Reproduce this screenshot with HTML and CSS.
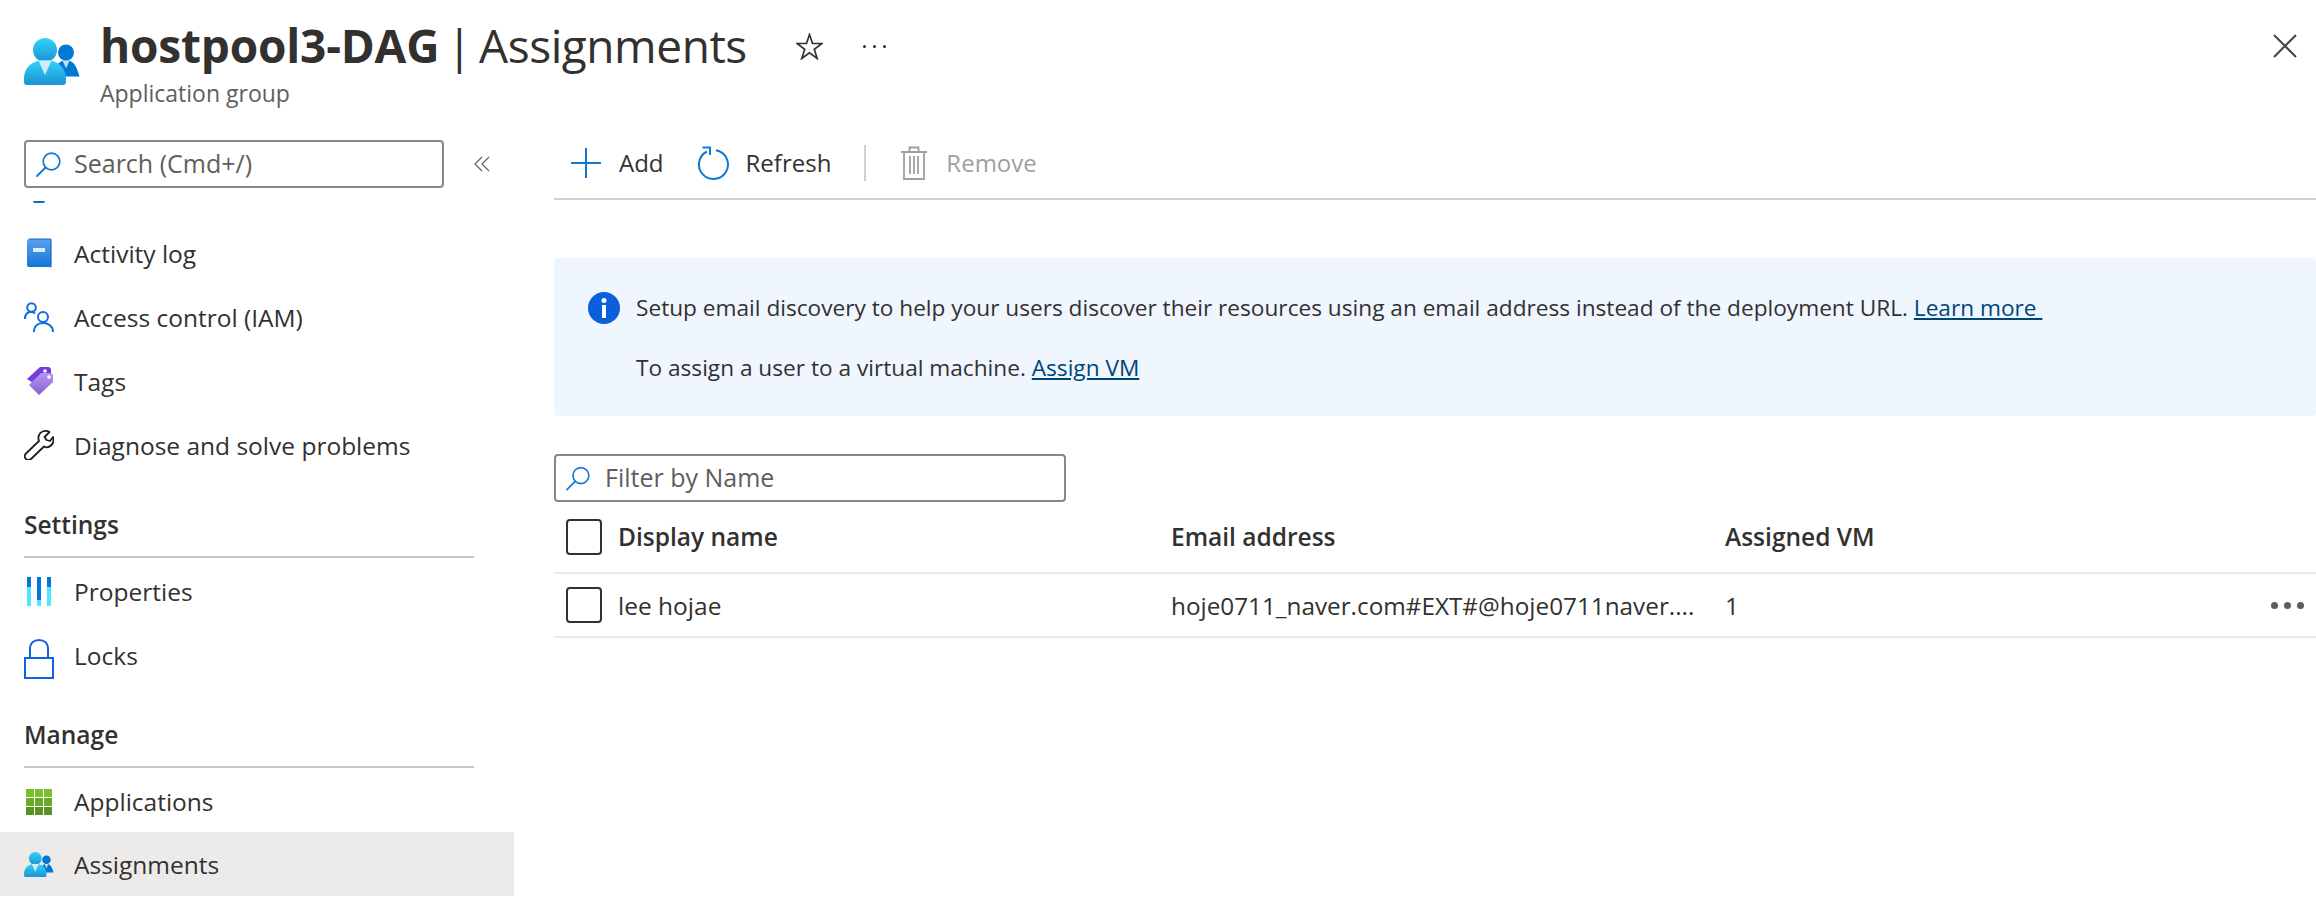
FILE: index.html
```html
<!DOCTYPE html>
<html lang="en">
<head>
<meta charset="utf-8">
<title>hostpool3-DAG | Assignments</title>
<link rel="stylesheet" href="styles.css">
</head>
<body>
<svg class="defs" width="0" height="0" aria-hidden="true">
  <defs>
    <linearGradient id="cyan" x1="0" y1="0" x2="0" y2="1"><stop offset="0" stop-color="#32d4f5"/><stop offset="1" stop-color="#1b93d6"/></linearGradient>
    <linearGradient id="book" x1="0" y1="0" x2="0" y2="1"><stop offset="0" stop-color="#5ea0ef"/><stop offset="1" stop-color="#0f78d8"/></linearGradient>
    <linearGradient id="tag" x1="0" y1="0" x2="0" y2="1"><stop offset="0" stop-color="#b796f9"/><stop offset="1" stop-color="#8661c5"/></linearGradient>
    <symbol id="people" viewBox="0 0 56 47">
      <circle cx="42" cy="14.500" r="8" fill="#0078d4"/>
      <path d="M32 29c2-4 6-7 10-7s8.500 3 10 7c1.500 3 2.500 6 3.500 9.500H34z" fill="#0078d4"/>
      <path d="M38.500 22.500h7l-3.500 8z" fill="#b8e2f8"/>
      <circle cx="21" cy="12" r="12" fill="url(#cyan)"/>
      <path d="M0 40c0-10 8-18 21-18s21 8 21 18v4c0 2-1.500 3-3 3H3c-2 0-3-1-3-3z" fill="url(#cyan)"/>
      <path d="M14.500 22.500h13L21 37z" fill="#c9f0fb"/>
    </symbol>
    <symbol id="search" viewBox="0 0 25 25">
      <circle cx="15.500" cy="9.500" r="8.300" fill="none" stroke="#0f78d4" stroke-width="1.700"/>
      <path d="M9.500 15.500 1 24" fill="none" stroke="#0f78d4" stroke-width="1.800" stroke-linecap="round"/>
    </symbol>
  </defs>
</svg>

<header class="blade-head">
  <svg class="head-icon" width="56" height="47"><use href="#people"/></svg>
  <div class="head-text">
    <h1 class="title"><strong>hostpool3-DAG</strong> | Assignments</h1>
    <p class="subtitle">Application group</p>
  </div>
  <svg class="star" width="27" height="27" viewBox="0 0 27 27"><path d="M13.500 1.500 16.500 10.500H26L18.300 16.200 21.200 25.500 13.500 19.800 5.800 25.500 8.700 16.200 1 10.500H10.500z" fill="none" stroke="#323130" stroke-width="1.700"/></svg>
  <div class="more"><i></i><i></i><i></i></div>
  <svg class="close" width="24" height="24" viewBox="0 0 24 24"><path d="M1 1 23 23M23 1 1 23" stroke="#444" stroke-width="2"/></svg>
</header>

<div class="body">
  <aside class="sidebar">
    <div class="search-row">
      <div class="field side-field">
        <svg class="field-icon" width="25" height="25"><use href="#search"/></svg>
        <span>Search (Cmd+/)</span>
      </div>
      <svg class="collapse" width="16" height="16" viewBox="0 0 16 16"><path d="M8 1 1 8l7 7M15 1 8 8l7 7" fill="none" stroke="#605e5c" stroke-width="1.200"/></svg>
    </div>
    <div class="clipped-icon"></div>
    <nav class="nav">
      <a class="item">
        <svg class="ico" width="30" height="30" viewBox="0 0 30 30"><path d="M5 1h21a1 1 0 0 1 1 1v26a1 1 0 0 1-1 1H5a2 2 0 0 1-2-2V3a2 2 0 0 1 2-2z" fill="url(#book)"/><path d="M5 1h21a1 1 0 0 1 1 1v26a1 1 0 0 1-1 1" fill="none" stroke="#0f6cbd" stroke-width="1.200"/><rect x="9" y="10" width="12" height="4" fill="#dcecfb"/></svg>
        <span>Activity log</span>
      </a>
      <a class="item">
        <svg class="ico" width="30" height="30" viewBox="0 0 30 30"><g fill="none" stroke="#0f6ce0" stroke-width="2"><circle cx="7.500" cy="5.500" r="4.300"/><path d="M1 17c0-4 2-7 6-7 2 0 3 .5 4 1.500"/><circle cx="19" cy="15" r="5"/><path d="M10 30c0-6 4-9 9-9s10 3 10 9"/></g></svg>
        <span>Access control (IAM)</span>
      </a>
      <a class="item">
        <svg class="ico" width="30" height="30" viewBox="0 0 30 30"><path d="M3 13 16 1h8c2 0 3 1 3 3v4L14 20z" fill="#773adc"/><path d="M5 19 17 7h9c2 0 3 1 3 3v6L15 29z" fill="url(#tag)"/><circle cx="21" cy="5" r="1.800" fill="#fff"/><circle cx="25" cy="11" r="1.800" fill="#fff"/></svg>
        <span>Tags</span>
      </a>
      <a class="item">
        <svg class="ico" width="30" height="30" viewBox="0 0 30 30"><path d="M18.500 1.500c3-1 5.500-.5 7 .5l-5 5 2 3 3.500 1 3-4c1 3 .5 6-1.500 8-2 2-5 3-7.500 1.500L7 29c-2 1.500-4.500 1-5.500-.5s-1-3.500.5-5L15 11c-1.500-4 0-8 3.500-9.500z" fill="none" stroke="#201f1e" stroke-width="1.800" stroke-linejoin="round"/></svg>
        <span>Diagnose and solve problems</span>
      </a>
      <h2 class="section">Settings</h2>
      <a class="item">
        <svg class="ico" width="30" height="30" viewBox="0 0 30 30"><rect x="3" y="1" width="4" height="29" fill="#50e6ff"/><rect x="13" y="1" width="4" height="29" fill="#50e6ff"/><rect x="23" y="1" width="4" height="29" fill="#50e6ff"/><rect x="3" y="1" width="4" height="10" fill="#0078d4"/><rect x="13" y="1" width="4" height="23" fill="#0078d4"/><rect x="23" y="1" width="4" height="10" fill="#0078d4"/></svg>
        <span>Properties</span>
      </a>
      <a class="item">
        <svg class="ico lock" width="30" height="40" viewBox="0 0 30 40"><path d="M6 19V10C6 4 10 1 15 1s9 3 9 9v9" fill="none" stroke="#0f62e0" stroke-width="2"/><rect x="1" y="19" width="28" height="20" fill="#fff" stroke="#0f62e0" stroke-width="2"/></svg>
        <span>Locks</span>
      </a>
      <h2 class="section section-manage">Manage</h2>
      <a class="item">
        <svg class="ico" width="30" height="30" viewBox="0 0 30 30"><g fill="#7cbd2f"><rect x="2" y="2" width="8" height="8"/><rect x="11" y="2" width="8" height="8"/><rect x="20" y="2" width="8" height="8"/></g><g fill="#6aaa25"><rect x="2" y="11" width="8" height="8"/><rect x="11" y="11" width="8" height="8"/><rect x="20" y="11" width="8" height="8"/></g><g fill="#5a9122"><rect x="2" y="20" width="8" height="8"/><rect x="11" y="20" width="8" height="8"/><rect x="20" y="20" width="8" height="8"/></g></svg>
        <span>Applications</span>
      </a>
      <a class="item active">
        <svg class="ico" width="30" height="25"><use href="#people"/></svg>
        <span>Assignments</span>
      </a>
    </nav>
  </aside>

  <main class="main">
    <div class="toolbar">
      <button class="cmd cmd-add">
        <svg width="30" height="32" viewBox="0 0 30 32"><path d="M0 16h30M15 1v30" stroke="#0f78d4" stroke-width="2"/></svg>
        <span>Add</span>
      </button>
      <button class="cmd cmd-refresh">
        <svg width="32" height="34" viewBox="0 0 32 34"><path d="M18 4.200A14.500 14.500 0 1 1 9 5.500" fill="none" stroke="#0f78d4" stroke-width="2"/><path d="M4.500 1.500h7.500v7.500" fill="none" stroke="#0f78d4" stroke-width="2"/></svg>
        <span>Refresh</span>
      </button>
      <div class="sep"></div>
      <button class="cmd cmd-remove">
        <svg width="26" height="34" viewBox="0 0 26 34"><path d="M0 6h26M8.500 6V1.500h9V6M3 6v27h20V6M9 10v18M13 10v18M17 10v18" fill="none" stroke="#a19f9d" stroke-width="1.800"/></svg>
        <span>Remove</span>
      </button>
    </div>

    <section class="banner">
      <svg class="info" width="32" height="32" viewBox="0 0 32 32"><circle cx="16" cy="16" r="16" fill="#0b5fdc"/><rect x="14" y="13" width="4" height="13" fill="#fff"/><circle cx="16" cy="8.500" r="2.500" fill="#fff"/></svg>
      <div class="banner-text">
        <p>Setup email discovery to help your users discover their resources using an email address instead of the deployment URL. <a class="link">Learn more&nbsp;</a></p>
        <p>To assign a user to a virtual machine. <a class="link">Assign VM</a></p>
      </div>
    </section>

    <div class="field filter-field">
      <svg class="field-icon" width="24" height="25"><use href="#search"/></svg>
      <span>Filter by Name</span>
    </div>

    <div class="grid-row grid-head">
      <span class="check"></span>
      <span>Display name</span>
      <span>Email address</span>
      <span>Assigned VM</span>
      <span></span>
    </div>
    <div class="grid-row grid-data">
      <span class="check"></span>
      <span>lee hojae</span>
      <span class="email">hoje0711_naver.com#EXT#@hoje0711naver....</span>
      <span>1</span>
      <span class="row-more"><i></i><i></i><i></i></span>
    </div>
  </main>
</div>
</body>
</html>
```

FILE: styles.css
```css
* { box-sizing: border-box; }
html, body { margin: 0; height: 902px; overflow: hidden; background: #fff; }
body { font-family: "Open Sans", "Noto Sans", "Liberation Sans", sans-serif; font-size: 24.500px; color: #323130; }
.defs { position: absolute; }

.blade-head { height: 120px; display: flex; align-items: flex-start; padding-left: 24px; }
.head-icon { margin-top: 38px; flex: none; }
.head-text { margin-left: 20px; padding-top: 15px; width: 696px; }
.title { margin: 0; font-size: 46px; line-height: 60px; font-weight: 400; white-space: nowrap; letter-spacing: -0.45px; word-spacing: -4px; }
.title strong { font-weight: 700; letter-spacing: -0.2px; }
.subtitle { margin: 3px 0 0; font-size: 23px; line-height: 30px; color: #605e5c; }
.star { margin-top: 33px; flex: none; }
.more { margin: 45px 0 0 40px; display: flex; gap: 7px; flex: none; }
.more i { width: 3px; height: 3px; border-radius: 50%; background: #323130; }
.close { margin: 34px 19px 0 auto; flex: none; }

.body { display: flex; height: 782px; }
.sidebar { width: 514px; flex: none; }
.search-row { display: flex; align-items: center; padding: 20px 0 0 24px; gap: 30px; }
.field { display: flex; align-items: center; height: 48px; border: 2px solid #8a8886; border-radius: 4px; color: #605e5c; font-size: 25px; }
.field span { padding-bottom: 3px; }
.side-field { width: 420px; padding-left: 10px; gap: 13px; }
.collapse { flex: none; }
.clipped-icon { width: 12px; height: 2px; margin: 13px 0 0 33px; background: #0f6cbd; border-radius: 0 0 6px 6px; }

.nav { margin-top: 18px; }
.item { display: flex; align-items: center; height: 64px; padding-left: 24px; gap: 20px; white-space: nowrap; }
.ico { flex: none; }
.lock { margin-top: 4px; margin-bottom: -4px; }
.item.active { background: #edebe9; }
.section { margin: 0 40px 1px 24px; height: 81px; padding-top: 31px; line-height: 34px; font-size: 24.500px; font-weight: 600; border-bottom: 2px solid #c8c6c4; }
.section-manage { height: 81px; margin-bottom: 0; padding-top: 31px; }
.section-manage + .item { padding-top: 3px; }

.main { flex: 1; min-width: 0; padding-left: 40px; }
.toolbar { display: flex; align-items: center; height: 80px; border-bottom: 2px solid #d2d0ce; padding: 7px 0 0 17px; font-size: 24px; }
.cmd { display: flex; align-items: center; border: 0; padding: 0; background: none; font: inherit; color: #323130; white-space: nowrap; }
.cmd-add { gap: 18px; }
.cmd-refresh { gap: 16px; margin-left: 34px; }
.sep { width: 2px; height: 36px; background: #d2d0ce; margin-left: 33px; }
.cmd-remove { gap: 19px; margin-left: 35px; color: #a19f9d; }

.banner { display: flex; margin-top: 58px; height: 158px; background: #eff6fe; border-radius: 4px; padding: 34px 0 0 34px; }
.info { flex: none; }
.banner-text { margin-left: 16px; margin-top: -2px; font-size: 22.650px; }
.banner-text p { margin: 0 0 24px; line-height: 36px; white-space: nowrap; }
.link { color: #004578; text-decoration: underline; }

.filter-field { width: 512px; margin-top: 38px; padding-left: 10px; gap: 15px; }

.grid-row { display: grid; grid-template-columns: 52px 553px 554px 1fr 45px; align-items: center; border-bottom: 2px solid #edebe9; padding-left: 12px; }
.grid-head { height: 72px; font-weight: 600; }
.grid-head span:not(.check) { padding-bottom: 2px; }
.grid-data { height: 64px; }
.check { width: 36px; height: 36px; border: 2px solid #323130; border-radius: 4px; }
.email { white-space: nowrap; font-size: 24.300px; }
.row-more { display: flex; gap: 6px; }
.row-more i { width: 7px; height: 7px; border-radius: 50%; background: #605e5c; }
```
